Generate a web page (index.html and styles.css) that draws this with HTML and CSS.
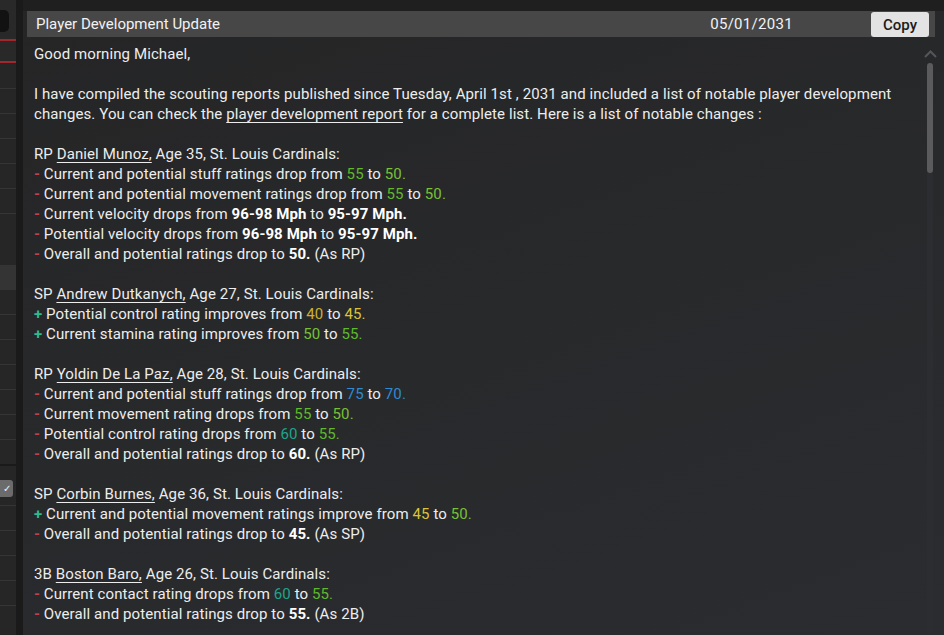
FILE: index.html
```html
<!DOCTYPE html>
<html>
<head>
<meta charset="utf-8">
<link rel="stylesheet" href="styles.css">
</head>
<body>
<div class="app">
  <aside class="sidebar">
    <div class="sb-top"><div class="sb-btn"></div></div>
    <div class="sb-red"></div>
    <div class="sb-gap1"></div>
    <div class="sb-red"></div>
    <div class="sb-row r26"></div>
    <div class="sb-row"></div>
    <div class="sb-row"></div>
    <div class="sb-row"></div>
    <div class="sb-row"></div>
    <div class="sb-row"></div>
    <div class="sb-plain h51"></div>
    <div class="sb-light"></div>
    <div class="sb-row"></div>
    <div class="sb-row"></div>
    <div class="sb-row"></div>
    <div class="sb-row"></div>
    <div class="sb-row"></div>
    <div class="sb-row"></div>
    <div class="sb-dark"></div>
    <div class="sb-check-row"><span class="sb-check">&#10003;</span></div>
    <div class="sb-row"></div>
    <div class="sb-row"></div>
    <div class="sb-row"></div>
    <div class="sb-row"></div>
  </aside>
  <div class="gutter"></div>
  <main class="main">
    <div class="topstrip"></div>
    <header class="header">
      <span class="title">Player Development Update</span>
      <span class="date">05/01/2031</span>
      <button class="copy">Copy</button>
    </header>
    <div class="body">
      <div class="content">
        <p>Good morning Michael,</p>
        <p>I have compiled the scouting reports published since Tuesday, April 1st , 2031 and included a list of notable player development changes. You can check the <span class="u">player development report</span> for a complete list. Here is a list of notable changes :</p>
        <p>RP <span class="u">Daniel Munoz,</span> Age 35, St. Louis Cardinals:<br>
<span class="minus">-</span> Current and potential stuff ratings drop from <span class="r55">55</span> to <span class="r50">50.</span><br>
<span class="minus">-</span> Current and potential movement ratings drop from <span class="r55">55</span> to <span class="r50">50.</span><br>
<span class="minus">-</span> Current velocity drops from <b>96-98 Mph</b> to <b>95-97 Mph.</b><br>
<span class="minus">-</span> Potential velocity drops from <b>96-98 Mph</b> to <b>95-97 Mph.</b><br>
<span class="minus">-</span> Overall and potential ratings drop to <b>50.</b> (As RP)</p>
        <p>SP <span class="u">Andrew Dutkanych,</span> Age 27, St. Louis Cardinals:<br>
<span class="plus">+</span> Potential control rating improves from <span class="r40">40</span> to <span class="r45">45.</span><br>
<span class="plus">+</span> Current stamina rating improves from <span class="r50">50</span> to <span class="r55">55.</span></p>
        <p>RP <span class="u">Yoldin De La Paz,</span> Age 28, St. Louis Cardinals:<br>
<span class="minus">-</span> Current and potential stuff ratings drop from <span class="r75">75</span> to <span class="r70">70.</span><br>
<span class="minus">-</span> Current movement rating drops from <span class="r55">55</span> to <span class="r50">50.</span><br>
<span class="minus">-</span> Potential control rating drops from <span class="r60">60</span> to <span class="r55">55.</span><br>
<span class="minus">-</span> Overall and potential ratings drop to <b>60.</b> (As RP)</p>
        <p>SP <span class="u">Corbin Burnes,</span> Age 36, St. Louis Cardinals:<br>
<span class="plus">+</span> Current and potential movement ratings improve from <span class="r45">45</span> to <span class="r50">50.</span><br>
<span class="minus">-</span> Overall and potential ratings drop to <b>45.</b> (As SP)</p>
        <p>3B <span class="u">Boston Baro,</span> Age 26, St. Louis Cardinals:<br>
<span class="minus">-</span> Current contact rating drops from <span class="r60">60</span> to <span class="r55">55.</span><br>
<span class="minus">-</span> Overall and potential ratings drop to <b>55.</b> (As 2B)</p>
      </div>
      <div class="scroll">
        <svg class="chev" width="13" height="8" viewBox="0 0 13 8"><path d="M1 7 L6.5 1.5 L12 7" fill="none" stroke="#55565a" stroke-width="2"/></svg>
        <div class="track"><div class="thumb"></div></div>
      </div>
    </div>
  </main>
</div>
</body>
</html>
```

FILE: styles.css
```css
* { box-sizing: border-box; }
html, body { margin: 0; padding: 0; }
body {
  background: #1e1e1f;
  font-family: Roboto, "Liberation Sans", Arial, sans-serif;
  color: #ececec;
  overflow: hidden;
}
.app {
  display: flex;
  width: 944px;
  height: 635px;
  overflow: hidden;
}
.sidebar {
  width: 16px;
  flex: none;
  background: #262627;
  display: flex;
  flex-direction: column;
}
.sb-top { height: 39px; padding-top: 10px; background: #29292a; }
.sb-btn { width: 9px; height: 22px; background: #121213; border-radius: 0 5px 5px 0; }
.sb-red { height: 2px; background: #a3262b; }
.sb-gap1 { height: 20px; background: #29292a; }
.sb-row { height: 25px; border-bottom: 1px solid #353536; flex: none; }
.sb-row.r26 { height: 26px; }
.sb-plain { flex: none; }
.h51 { height: 51px; }
.sb-light { height: 25px; background: #343435; flex: none; }
.sb-dark { height: 26px; border-bottom: 2px solid #1a1a1b; flex: none; }
.sb-check-row { height: 40px; padding-top: 14px; border-bottom: 1px solid #353536; flex: none; }
.sb-check {
  display: block;
  width: 13px;
  height: 17px;
  background: #6b6b6c;
  border-radius: 0 3px 3px 0;
  color: #f2f2f2;
  font-size: 10px;
  line-height: 17px;
  text-align: right;
  padding-right: 2px;
}
.gutter { width: 7px; flex: none; background: #1a1a1b; }
.main {
  flex: 1;
  display: flex;
  flex-direction: column;
  background: linear-gradient(160deg, #252526 0%, #28292b 50%, #2b2c30 100%);
  min-width: 0;
}
.topstrip { height: 11px; background: #1f1f20; flex: none; }
.header {
  flex: none;
  height: 26px;
  margin: 0 9px 0 4px;
  background: #474747;
  display: flex;
  align-items: center;
  padding-left: 9px;
  padding-right: 6px;
}
.title {
  flex: 1;
  font-size: 15px;
  color: #f2f2f2;
}
.date {
  font-size: 15px;
  color: #f2f2f2;
  margin-right: 78px;
  letter-spacing: 0.3px;
}
.copy {
  width: 58px;
  height: 25px;
  margin-top: 1px;
  border: none;
  border-radius: 3px;
  background: #e3e3e3;
  color: #1b1b1b;
  font-family: Roboto, "Liberation Sans", Arial, sans-serif;
  font-size: 15px;
  font-weight: 500;
  padding: 0;
}
.body {
  flex: 1;
  display: flex;
  min-height: 0;
}
.content {
  flex: 1;
  padding: 7px 16px 0 11px;
  font-size: 15px;
  letter-spacing: 0.1px;
  line-height: 20px;
  color: #ededed;
}
.content p { margin: 0 0 20px 0; }
.content b { font-weight: 700; color: #ffffff; }
.u {
  text-decoration: underline;
  text-underline-offset: 3px;
  text-decoration-thickness: 1px;
}
.minus { color: #c2414c; font-weight: 700; }
.plus { color: #2dbb8e; font-weight: 700; }
.r40 { color: #cdb12c; }
.r45 { color: #dcc43a; }
.r50 { color: #77c136; }
.r55 { color: #5fb92c; }
.r60 { color: #1ea58c; }
.r70, .r75 { color: #2f8ad4; }
.scroll {
  width: 21px;
  flex: none;
  display: flex;
  flex-direction: column;
  align-items: flex-start;
  padding-top: 13px;
  padding-left: 1px;
}
.chev { display: block; }
.track {
  margin-top: 5px;
  margin-left: 3px;
  width: 6px;
  flex: 1;
  background: #2c2d30;
  border-radius: 3px;
}
.thumb {
  height: 110px;
  background: #5b5b5e;
  border-radius: 3px;
}
```
